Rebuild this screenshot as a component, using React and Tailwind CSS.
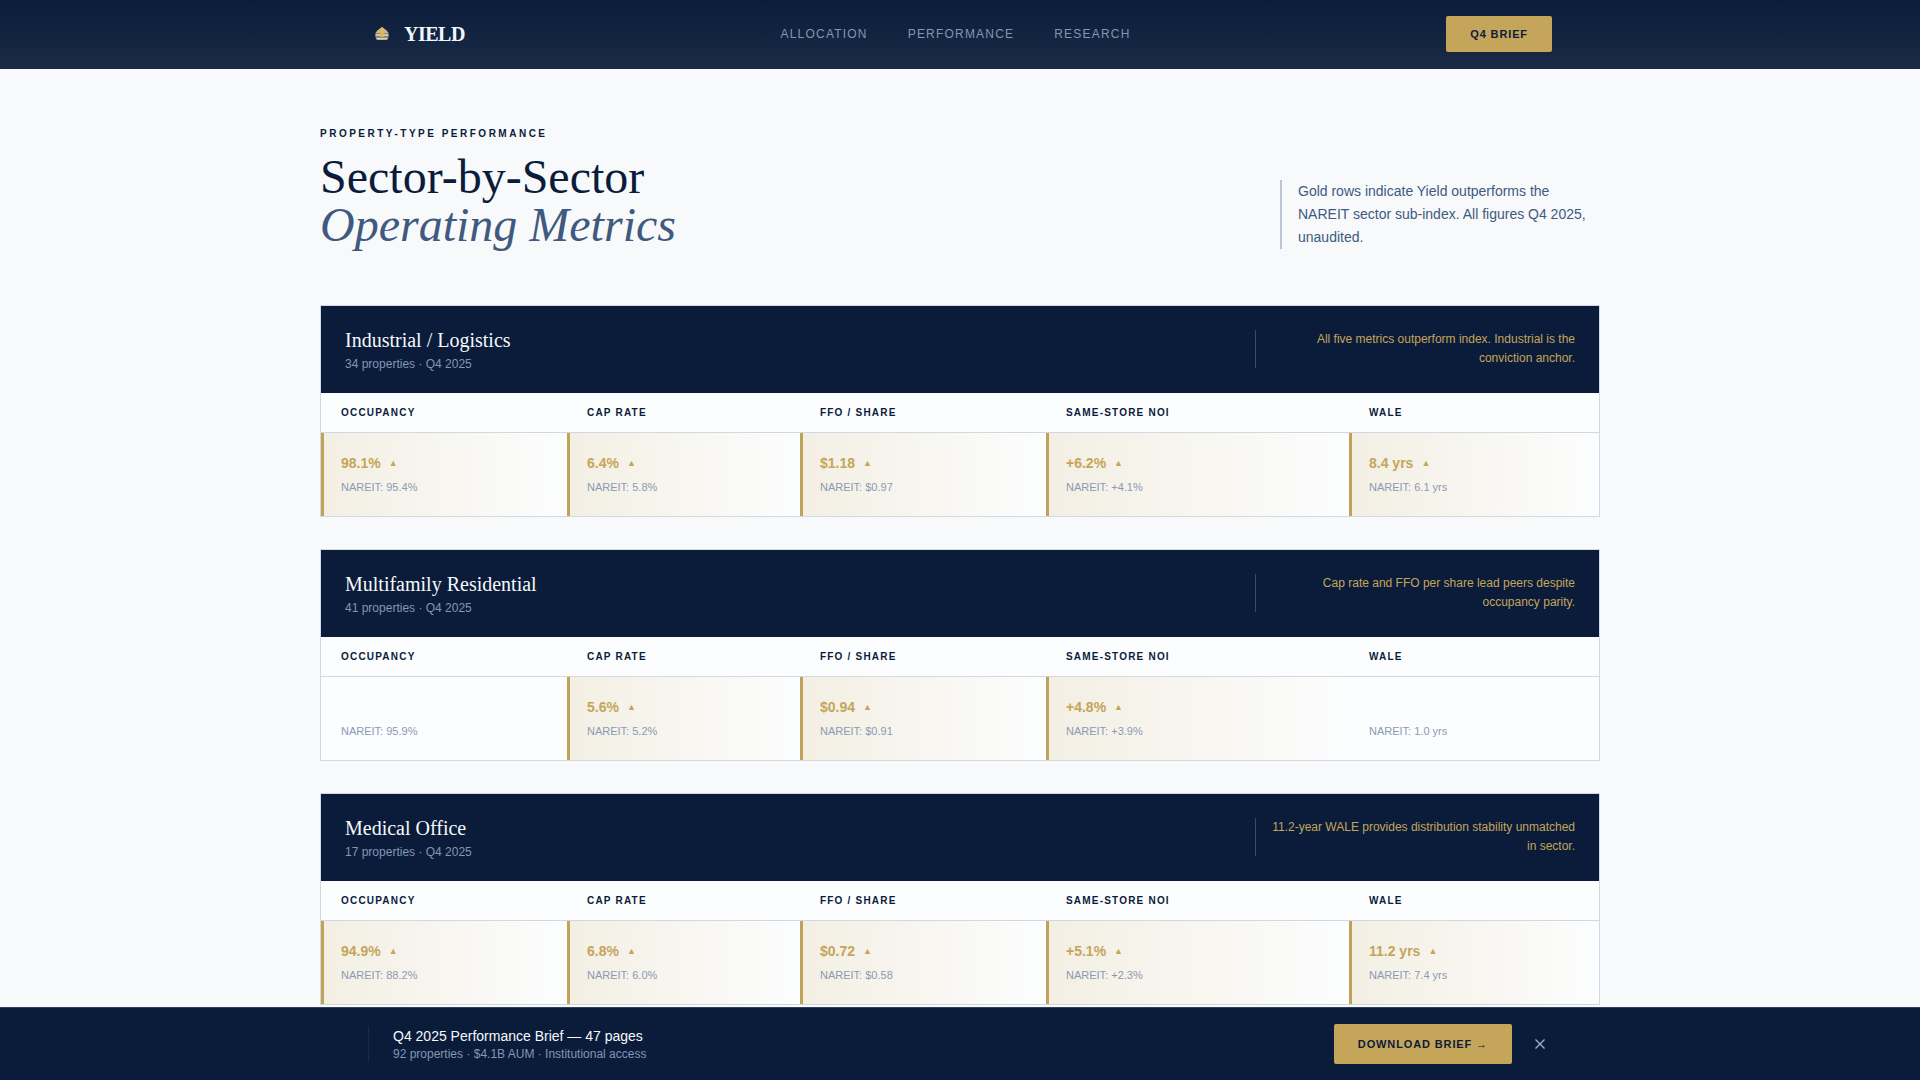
import React, { useState } from 'react';

const columns = ['Occupancy', 'Cap Rate', 'FFO / Share', 'Same-Store NOI', 'WALE'];

const navLinks = ['Allocation', 'Performance', 'Research'];

const sectors = [
  {
    name: 'Industrial / Logistics',
    properties: 34,
    note: 'All five metrics outperform index. Industrial is the conviction anchor.',
    metrics: [
      { value: '98.1%', index: '95.4%' },
      { value: '6.4%', index: '5.8%' },
      { value: '$1.18', index: '$0.97' },
      { value: '+6.2%', index: '+4.1%' },
      { value: '8.4 yrs', index: '6.1 yrs' },
    ],
  },
  {
    name: 'Multifamily Residential',
    properties: 41,
    note: 'Cap rate and FFO per share lead peers despite occupancy parity.',
    metrics: [
      { value: null, index: '95.9%' },
      { value: '5.6%', index: '5.2%' },
      { value: '$0.94', index: '$0.91' },
      { value: '+4.8%', index: '+3.9%' },
      { value: null, index: '1.0 yrs' },
    ],
  },
  {
    name: 'Medical Office',
    properties: 17,
    note: '11.2-year WALE provides distribution stability unmatched in sector.',
    metrics: [
      { value: '94.9%', index: '88.2%' },
      { value: '6.8%', index: '6.0%' },
      { value: '$0.72', index: '$0.58' },
      { value: '+5.1%', index: '+2.3%' },
      { value: '11.2 yrs', index: '7.4 yrs' },
    ],
  },
];

const Logo = () => (
  <svg className="h-7 w-7" viewBox="0 0 28 28" fill="none" aria-hidden="true">
    <path d="M14 7l4.500 3.500 2 2.500v4.500L18.500 20h-9l-2-2.500V13l2-2.500z" fill="#8f8a78" />
    <path d="M14 7l4.500 3.500 2 2.500H7.500l2-2.500z" fill="#d3b578" />
    <path d="M7.500 15h13M8.500 18.800h11" stroke="#dcd6b6" strokeWidth="1.600" />
    <path d="M14 8.500v8.500" stroke="#e2b65e" strokeWidth="3" />
  </svg>
);

const Navbar = () => (
  <header className="bg-linear-to-b from-[#0a1c3b] to-[#1b2b45]">
    <div className="mx-auto flex max-w-7xl items-center justify-between px-12 pt-4 pb-[17px]">
      <a href="#" className="flex items-center gap-2">
        <Logo />
        <span className="font-['Liberation_Serif',serif] text-xl leading-7 font-bold tracking-tight text-[#f0f6fb]">
          YIELD
        </span>
      </a>
      <nav className="flex gap-10">
        {navLinks.map((link) => (
          <a
            key={link}
            href={`#${link.toLowerCase()}`}
            className="text-xs tracking-widest text-[#8396b5] uppercase"
          >
            {link}
          </a>
        ))}
      </nav>
      <button
        type="button"
        className="h-9 rounded-xs bg-[#c5a55a] px-6 text-[11px] font-bold tracking-[0.08em] text-[#0a1c3b] uppercase"
      >
        Q4 Brief
      </button>
    </div>
  </header>
);

const MetricCell = ({ value, index }) => (
  <td
    className={`border-l-[3px] py-5 pr-5 pl-[17px] ${
      value
        ? 'border-[#c0a35a] bg-linear-to-r from-[#f3efe3] to-[#fcfdfe]'
        : 'border-transparent'
    }`}
  >
    <div className="flex h-5 items-center gap-2 text-sm font-bold text-[#c5a55a]">
      {value && (
        <>
          <span>{value}</span>
          <span className="text-[9px]">▲</span>
        </>
      )}
    </div>
    <div className="mt-[5px] text-[11px] leading-[18px] text-[#8b9ab5]">NAREIT: {index}</div>
  </td>
);

const SectorCard = ({ name, properties, note, metrics }) => (
  <article className="border border-[#d2d8e1] bg-[#fcfdfe]">
    <div className="flex items-center justify-between bg-[#0a1c3a] px-6 pt-[19px] pb-5">
      <div>
        <h2 className="font-['Liberation_Serif',serif] text-xl leading-[30px] text-[#f5f9fc]">{name}</h2>
        <p className="text-xs leading-[18px] text-[#8396b5]">{properties} properties · Q4 2025</p>
      </div>
      <p className="w-80 border-l border-[#3b4a64] pl-4 text-right text-xs leading-[19px] text-[#c5a55a]">
        {note}
      </p>
    </div>
    <table className="w-full table-fixed border-separate border-spacing-0 text-left">
      <colgroup>
        <col className="w-[246px]" />
        <col className="w-[233px]" />
        <col className="w-[246px]" />
        <col className="w-[303px]" />
        <col className="w-[250px]" />
      </colgroup>
      <thead>
        <tr>
          {columns.map((column) => (
            <th
              key={column}
              className="border-b border-[#d2d8e1] px-5 py-3 text-[10px] leading-[15px] font-bold tracking-[0.12em] text-[#0a1c3a] uppercase"
            >
              {column}
            </th>
          ))}
        </tr>
      </thead>
      <tbody>
        <tr>
          {metrics.map((metric, i) => (
            <MetricCell key={columns[i]} {...metric} />
          ))}
        </tr>
      </tbody>
    </table>
  </article>
);

const BriefBar = ({ onClose }) => (
  <div className="fixed inset-x-0 bottom-0 border-t border-[#33405a] bg-[#0a1c3a]">
    <div className="mx-auto flex max-w-7xl items-center justify-between px-12 py-4">
      <div className="border-l border-[#1a2a47] pl-6">
        <p className="text-sm leading-5 text-[#f5f9fc]">Q4 2025 Performance Brief — 47 pages</p>
        <p className="text-xs leading-4 text-[#8396b5]">92 properties · $4.1B AUM · Institutional access</p>
      </div>
      <div className="flex items-center gap-4">
        <button
          type="button"
          className="h-10 rounded-xs bg-[#c5a55a] px-6 text-[11px] font-bold tracking-[0.08em] text-[#0a1c3b] uppercase"
        >
          Download Brief →
        </button>
        <button
          type="button"
          aria-label="Close"
          onClick={onClose}
          className="flex h-6 w-6 items-center justify-center text-[#a3b1c8]"
        >
          <svg className="h-3 w-3" viewBox="0 0 12 12" stroke="currentColor" strokeWidth="1.3">
            <path d="M1.5 1.5l9 9M10.5 1.5l-9 9" />
          </svg>
        </button>
      </div>
    </div>
  </div>
);

const App = () => {
  const [showBar, setShowBar] = useState(true);

  return (
    <div className="min-h-screen bg-[#f7f9fb] font-['Liberation_Sans',sans-serif]">
      <Navbar />
      <main className="mx-auto max-w-7xl pt-[57px]">
        <div className="mb-14 flex items-end justify-between">
          <div>
            <p className="mb-3 text-[10px] leading-[15px] font-bold tracking-[0.25em] text-[#0a1c3a] uppercase">
              Property-Type Performance
            </p>
            <h1 className="font-['Liberation_Serif',serif] text-5xl leading-none text-[#0a1c3a]">
              Sector-by-Sector
              <br />
              <em className="text-[#40597f]">Operating Metrics</em>
            </h1>
          </div>
          <p className="w-80 border-l-2 border-[#bcc5d5] pl-4 text-sm leading-[23px] text-[#40597f]">
            Gold rows indicate Yield outperforms the NAREIT sector sub-index. All figures Q4 2025, unaudited.
          </p>
        </div>
        <div className="flex flex-col gap-8 pb-20">
          {sectors.map((sector) => (
            <SectorCard key={sector.name} {...sector} />
          ))}
        </div>
      </main>
      {showBar && <BriefBar onClose={() => setShowBar(false)} />}
    </div>
  );
};

export default App;
